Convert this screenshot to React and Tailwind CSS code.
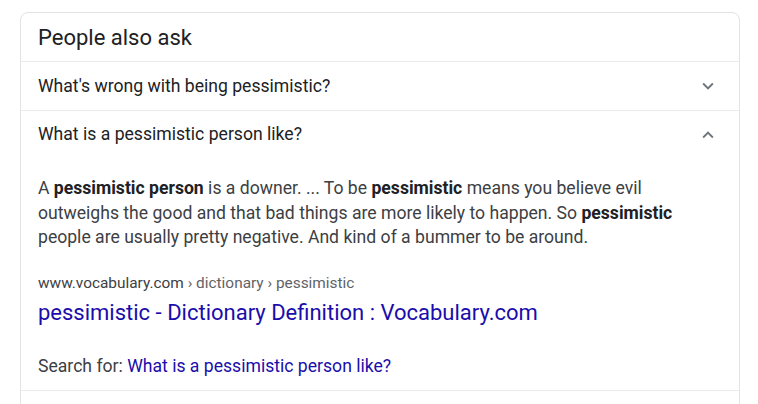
import React from "react";

const Chevron = ({ up }) => (
  <svg width="22" height="22" viewBox="0 0 24 24" className={up ? "rotate-180" : ""}>
    <path d="M7.41 8.59 12 13.17l4.59-4.58L18 10l-6 6-6-6z" fill="#70757a" />
  </svg>
);

export default function App() {
  return (
    <div className="w-[758px] h-[404px] bg-white overflow-hidden pt-[12px] pl-[20px]" style={{ fontFamily: "Roboto, Arial, sans-serif" }}>
      <div className="w-[720px] h-[420px] border border-[#e3e3e3] rounded-t-[8px] text-[#202124]">
        <div className="h-[48px] flex items-center pl-[17px] text-[22px] pt-[1px]">People also ask</div>
        <div className="border-t border-[#ebebeb] h-[49px] flex items-center justify-between pl-[17px] pr-[20px] text-[17.6px]">
          <span>What's wrong with being pessimistic?</span>
          <Chevron />
        </div>
        <div className="border-t border-[#ebebeb] pl-[17px] pr-[20px]">
          <div className="h-[47px] flex items-center justify-between text-[17.6px]">
            <span>What is a pessimistic person like?</span>
            <Chevron up />
          </div>
          <div className="pt-[18px] w-[662px] text-[17.6px] leading-[24.5px] text-[#3c4043]">
            A <b className="font-bold text-[#202124]">pessimistic person</b> is a downer. ... To be <b className="font-bold text-[#202124]">pessimistic</b> means you believe evil outweighs the good and that bad things are more likely to happen. So <b className="font-bold text-[#202124]">pessimistic</b> people are usually pretty negative. And kind of a bummer to be around.
          </div>
          <div className="mt-[21px] text-[15.4px] leading-[24px] text-[#3c4043]">
            www.vocabulary.com <span className="text-[#5f6368]">› dictionary › pessimistic</span>
          </div>
          <div className="mt-[3px] text-[22px] leading-[30px] text-[#1a0dab]">pessimistic - Dictionary Definition : Vocabulary.com</div>
          <div className="mt-[26px] text-[17.6px] leading-[24px] text-[#3c4043]">
            Search for: <span className="text-[#1a0dab]">What is a pessimistic person like?</span>
          </div>
          <div className="h-[12px]" />
        </div>
        <div className="border-t border-[#ebebeb]" />
      </div>
    </div>
  );
}
